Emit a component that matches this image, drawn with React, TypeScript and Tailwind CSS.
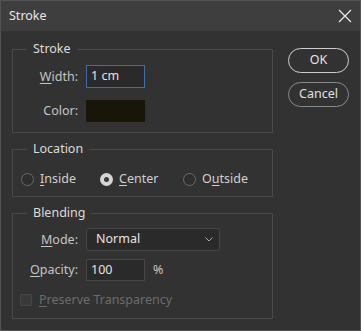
import React from "react";

const Legend = ({ children }: { children: React.ReactNode }) => (
  <div className="-mt-[10px] ml-[14px] h-[18px] w-fit bg-[#323232] px-[6px] text-[12.5px] leading-[18px] text-[#dcdcdc]">
    {children}
  </div>
);

const Label = ({ children }: { children: React.ReactNode }) => (
  <div className="w-[65px] text-right text-[12.5px] leading-[18px] text-[#c4c4c4]">{children}</div>
);

const Radio = ({ checked, children, w }: { checked?: boolean; children: React.ReactNode; w: string }) => (
  <div className={`flex items-center ${w}`}>
    {checked ? (
      <span className="flex h-[13px] w-[13px] items-center justify-center rounded-full bg-[#d6d6d6]">
        <span className="h-[5px] w-[5px] rounded-full bg-[#3a3a3a]" />
      </span>
    ) : (
      <span className="h-[13px] w-[13px] rounded-full border border-[#6a6a6a] bg-[#2e2e2e]" />
    )}
    <span className="ml-[6px] text-[12.5px] leading-[18px] text-[#d0d0d0]">{children}</span>
  </div>
);

export default function App() {
  return (
    <div className="flex h-[331px] w-[361px] flex-col border border-[#545454] bg-[#323232] font-['Noto_Sans','Liberation_Sans',sans-serif]">
      <div className="flex h-[30px] shrink-0 items-center justify-between bg-[#3e3e3e] pl-[8px] pr-[8px]">
        <span className="text-[12.5px] text-[#e6e6e6]">Stroke</span>
        <svg width="14" height="14" viewBox="0 0 14 14">
          <path d="M1 1 L13 13 M13 1 L1 13" stroke="#e8e8e8" strokeWidth="1.3" />
        </svg>
      </div>

      <div className="flex">
        <div className="ml-[11px] flex w-[261px] flex-col">
          {/* Stroke */}
          <div className="mt-[18px] h-[84px] border border-[#4a4a4a]">
            <Legend>Stroke</Legend>
            <div className="mt-[7px] flex items-center">
              <Label>
                <u className="underline-offset-2">W</u>idth:
              </Label>
              <div className="ml-[8px] flex h-[23px] w-[59px] items-center border border-[#3d6ea6] bg-[#2a2a2a] pl-[4px] text-[12.5px] text-[#e4e4e4]">
                1 cm
              </div>
            </div>
            <div className="mt-[12px] flex items-center">
              <Label>Color:</Label>
              <div className="ml-[8px] h-[22px] w-[59px] bg-[#191609]" />
            </div>
          </div>

          {/* Location */}
          <div className="mt-[16px] h-[48px] border border-[#4a4a4a]">
            <Legend>Location</Legend>
            <div className="mt-[12px] flex items-center pl-[8px]">
              <Radio w="w-[79px]">
                <u className="underline-offset-2">I</u>nside
              </Radio>
              <Radio checked w="w-[83px]">
                <u className="underline-offset-2">C</u>enter
              </Radio>
              <Radio w="w-[80px]">
                O<u className="underline-offset-2">u</u>tside
              </Radio>
            </div>
          </div>

          {/* Blending */}
          <div className="mt-[16px] h-[106px] border border-[#4a4a4a]">
            <Legend>Blending</Legend>
            <div className="mt-[6px] flex items-center">
              <Label>
                <u className="underline-offset-2">M</u>ode:
              </Label>
              <div className="ml-[8px] flex h-[23px] w-[134px] items-center justify-between rounded-[3px] border border-[#474747] bg-[#2a2a2a] pl-[9px] pr-[6px] text-[12.5px] text-[#e4e4e4]">
                Normal
                <svg width="8" height="5" viewBox="0 0 8 5">
                  <path d="M0.5 0.5 L4 4 L7.5 0.5" fill="none" stroke="#a8a8a8" strokeWidth="1" />
                </svg>
              </div>
            </div>
            <div className="mt-[8px] flex items-center">
              <Label>
                <u className="underline-offset-2">O</u>pacity:
              </Label>
              <div className="ml-[8px] flex h-[22px] w-[59px] items-center border border-[#474747] bg-[#2a2a2a] pl-[4px] text-[12.5px] text-[#e4e4e4]">
                100
              </div>
              <span className="ml-[8px] text-[12.5px] text-[#c4c4c4]">%</span>
            </div>
            <div className="mt-[10px] flex items-center pl-[7px]">
              <span className="h-[12px] w-[12px] border border-[#464646] bg-[#3a3a3a]" />
              <span className="ml-[7px] text-[12.5px] leading-[18px] text-[#6c6c6c]">
                <u className="underline-offset-2">P</u>reserve Transparency
              </span>
            </div>
          </div>
        </div>

        <div className="ml-[15px] flex flex-col">
          <button className="mt-[17px] h-[25px] w-[61px] rounded-full border-[1.5px] border-[#cfcfcf] text-[12.5px] text-[#e4e4e4]">
            OK
          </button>
          <button className="mt-[9px] h-[25px] w-[61px] rounded-full border border-[#8a8a8a] text-[12.5px] text-[#e0e0e0]">
            Cancel
          </button>
        </div>
      </div>
    </div>
  );
}
